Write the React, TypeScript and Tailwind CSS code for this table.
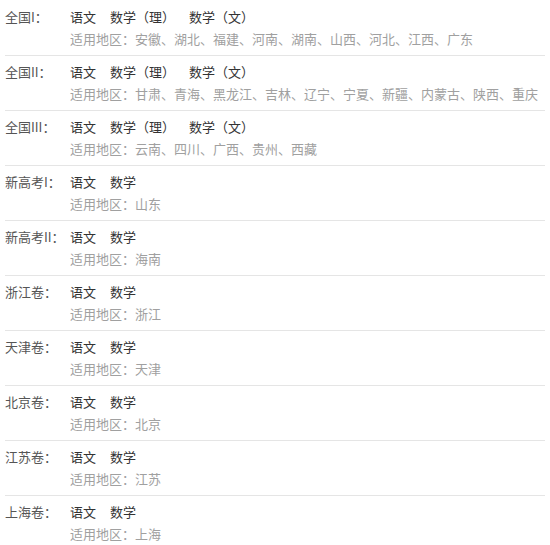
import React from "react";

type Row = { label: string; subjects: string[]; regions: string };

const full = ["语文", "数学（理）", "数学（文）"];
const two = ["语文", "数学"];

const rows: Row[] = [
  { label: "全国I：", subjects: full, regions: "安徽、湖北、福建、河南、湖南、山西、河北、江西、广东" },
  { label: "全国II：", subjects: full, regions: "甘肃、青海、黑龙江、吉林、辽宁、宁夏、新疆、内蒙古、陕西、重庆" },
  { label: "全国III：", subjects: full, regions: "云南、四川、广西、贵州、西藏" },
  { label: "新高考I：", subjects: two, regions: "山东" },
  { label: "新高考II：", subjects: two, regions: "海南" },
  { label: "浙江卷：", subjects: two, regions: "浙江" },
  { label: "天津卷：", subjects: two, regions: "天津" },
  { label: "北京卷：", subjects: two, regions: "北京" },
  { label: "江苏卷：", subjects: two, regions: "江苏" },
  { label: "上海卷：", subjects: two, regions: "上海" },
];

export default function App() {
  return (
    <div
      className="w-[550px] h-[545px] overflow-hidden bg-white px-[5px] pt-[1px] text-[13px]"
      style={{ fontFamily: '"Microsoft YaHei", "Noto Sans CJK SC", "Noto Sans", sans-serif' }}
    >
      {rows.map((r, i) => (
        <div
          key={i}
          className={`flex py-[5px] ${i < rows.length - 1 ? "border-b border-[#e5e5e5]" : ""}`}
        >
          <div className="w-[65px] shrink-0 leading-[22px] text-[#555]">{r.label}</div>
          <div className="flex flex-col">
            <div className="flex leading-[22px] text-[#333]">
              {r.subjects.map((s, j) => (
                <span key={j} className="mr-[14px]">
                  {s}
                </span>
              ))}
            </div>
            <div className="leading-[22px] text-[#a0a0a0] whitespace-nowrap">适用地区：{r.regions}</div>
          </div>
        </div>
      ))}
    </div>
  );
}
